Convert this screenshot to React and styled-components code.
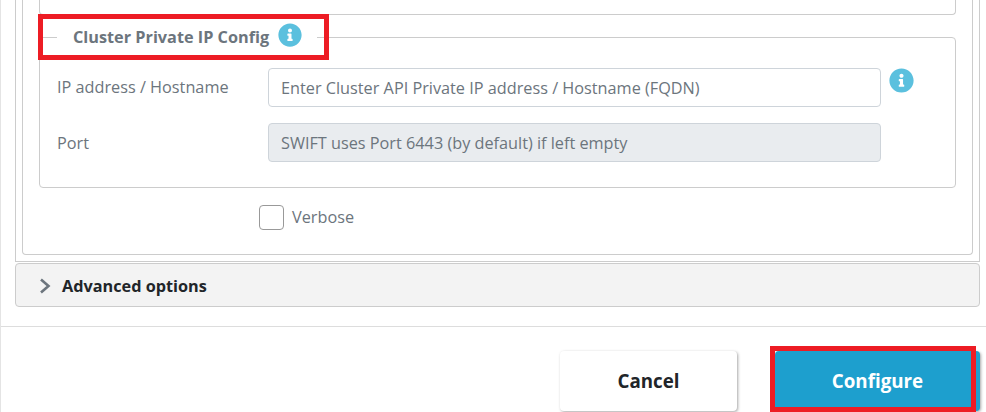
import React from 'react'
import styled, { createGlobalStyle } from 'styled-components'
import { FaInfoCircle } from 'react-icons/fa'

const GlobalStyle = createGlobalStyle`
  html, body { margin: 0; padding: 0; background: #fff; }
  body { font-family: "Open Sans", "Liberation Sans", sans-serif; }
`

const Page = styled.div`
  position: relative;
  width: 986px;
  height: 412px;
  overflow: hidden;
  background: #fff;
  box-sizing: border-box;
  border-left: 1px solid #e4e4e4;
`

const Tick = styled.span`
  position: absolute;
  left: -1px;
  top: 207px;
  width: 1px;
  height: 6px;
  background: #222;
`

const OuterPanel = styled.div`
  box-sizing: border-box;
  width: 965px;
  height: 262px;
  margin-left: 14px;
  padding: 0 6px 6px;
  border: 1px solid #ccc;
  border-top: 0;
`

const InnerCard = styled.div`
  box-sizing: border-box;
  height: 100%;
  padding: 0 16px;
  border: 1px solid #ccc;
  border-top: 0;
  border-radius: 0 0 4px 4px;
`

const PreviousGroup = styled.div`
  height: 15px;
  box-sizing: border-box;
  border: 1px solid #ccc;
  border-top: 0;
  border-radius: 0 0 4px 4px;
`

const Group = styled.fieldset`
  box-sizing: border-box;
  height: 165px;
  margin: 8px 0 0;
  padding: 17px 17px 0;
  min-width: 0;
  border: 1px solid #ccc;
  border-radius: 4px;
`

const GroupLegend = styled.legend`
  display: flex;
  align-items: center;
  gap: 9px;
  margin-left: 0;
  padding: 0 15px 0 16px;
  color: #6c757d;
  font-size: 16.25px;
  font-weight: 700;
  line-height: 24px;
`

const InfoIcon = styled(FaInfoCircle)`
  display: block;
  flex: none;
  width: ${p => p.$size}px;
  height: ${p => p.$size}px;
  margin-bottom: ${p => p.$lift || 0}px;
  color: #5bc0de;
`

const Row = styled.div`
  display: flex;
  align-items: flex-start;
  height: 39px;
  margin-bottom: 16px;
`

const RowLabel = styled.label`
  flex: none;
  width: 211px;
  padding-top: ${p => p.$nudge || 0}px;
  color: #6c757d;
  font-size: 16.25px;
  line-height: 39px;
`

const TextField = styled.input`
  box-sizing: border-box;
  flex: none;
  width: 613px;
  height: 39px;
  margin-right: 8px;
  padding: 0 12px;
  border: 1px solid #ced4da;
  border-radius: 4px;
  background: ${p => (p.disabled ? '#e9ecef' : '#fff')};
  font-family: inherit;
  font-size: 16.25px;
  &::placeholder { color: #6c757d; opacity: 1; }
`

const VerboseRow = styled.label`
  display: flex;
  align-items: center;
  gap: 8px;
  margin: 16px 0 0 220px;
  color: #6c757d;
  font-size: 16.25px;
  line-height: 26px;
`

const CheckBox = styled.span`
  box-sizing: border-box;
  display: block;
  width: 25px;
  height: 25px;
  border: 1px solid #999;
  border-radius: 4px;
  background: #fff;
`

const Accordion = styled.div`
  box-sizing: border-box;
  display: flex;
  align-items: center;
  gap: 11px;
  width: 965px;
  height: 44px;
  margin: 1px 0 0 14px;
  padding: 2px 0 0 23px;
  border: 1px solid #ccc;
  border-radius: 4px;
  background: #f3f3f3;
  color: #212529;
  font-size: 16.25px;
  font-weight: 700;
`

const Chevron = styled.svg`
  display: block;
  flex: none;
  width: 12px;
  height: 16px;
`

const Footer = styled.div`
  display: flex;
  justify-content: flex-end;
  gap: 38px;
  height: 85px;
  margin-top: 19px;
  padding: 24px 6px 0 0;
  box-sizing: border-box;
  border-top: 1px solid #ddd;
`

const FooterButton = styled.button`
  box-sizing: border-box;
  width: ${p => p.$width}px;
  height: 60px;
  padding: 0 0 2px;
  border: 0;
  border-radius: 4px;
  background: ${p => (p.$primary ? '#1d9fce' : '#fff')};
  box-shadow: 1px 1px 3px rgba(0, 0, 0, 0.35);
  color: ${p => (p.$primary ? '#fff' : '#212529')};
  font-family: inherit;
  font-size: 18.75px;
  font-weight: 700;
`

// red annotations drawn over the screenshot
const Highlight = styled.div`
  position: absolute;
  box-sizing: border-box;
  left: ${p => p.$x}px;
  top: ${p => p.$y}px;
  width: ${p => p.$w}px;
  height: ${p => p.$h}px;
  border: 5px solid #ed1c24;
  pointer-events: none;
`

const App = () => {
  return (
    <Page>
      <GlobalStyle />
      <Tick />
      <OuterPanel>
        <InnerCard>
          <PreviousGroup />
          <Group>
            <GroupLegend>
              Cluster Private IP Config
              <InfoIcon $size={24} $lift={4} />
            </GroupLegend>
            <Row>
              <RowLabel>IP address / Hostname</RowLabel>
              <TextField placeholder="Enter Cluster API Private IP address / Hostname (FQDN)" />
              <InfoIcon $size={25} />
            </Row>
            <Row>
              <RowLabel $nudge={1}>Port</RowLabel>
              <TextField disabled placeholder="SWIFT uses Port 6443 (by default) if left empty" />
            </Row>
          </Group>
          <VerboseRow>
            <CheckBox />
            Verbose
          </VerboseRow>
        </InnerCard>
      </OuterPanel>
      <Accordion>
        <Chevron viewBox="0 0 12 16">
          <path d="M2 1.5 L9.5 8 L2 14.5" fill="none" stroke="#6c757d" strokeWidth="2.6" />
        </Chevron>
        Advanced options
      </Accordion>
      <Footer>
        <FooterButton $width={177}>Cancel</FooterButton>
        <FooterButton $width={205} $primary>Configure</FooterButton>
      </Footer>
      <Highlight $x={37} $y={14} $w={291} $h={46} />
      <Highlight $x={769} $y={346} $w={206} $h={66} />
    </Page>
  )
}

export default App
